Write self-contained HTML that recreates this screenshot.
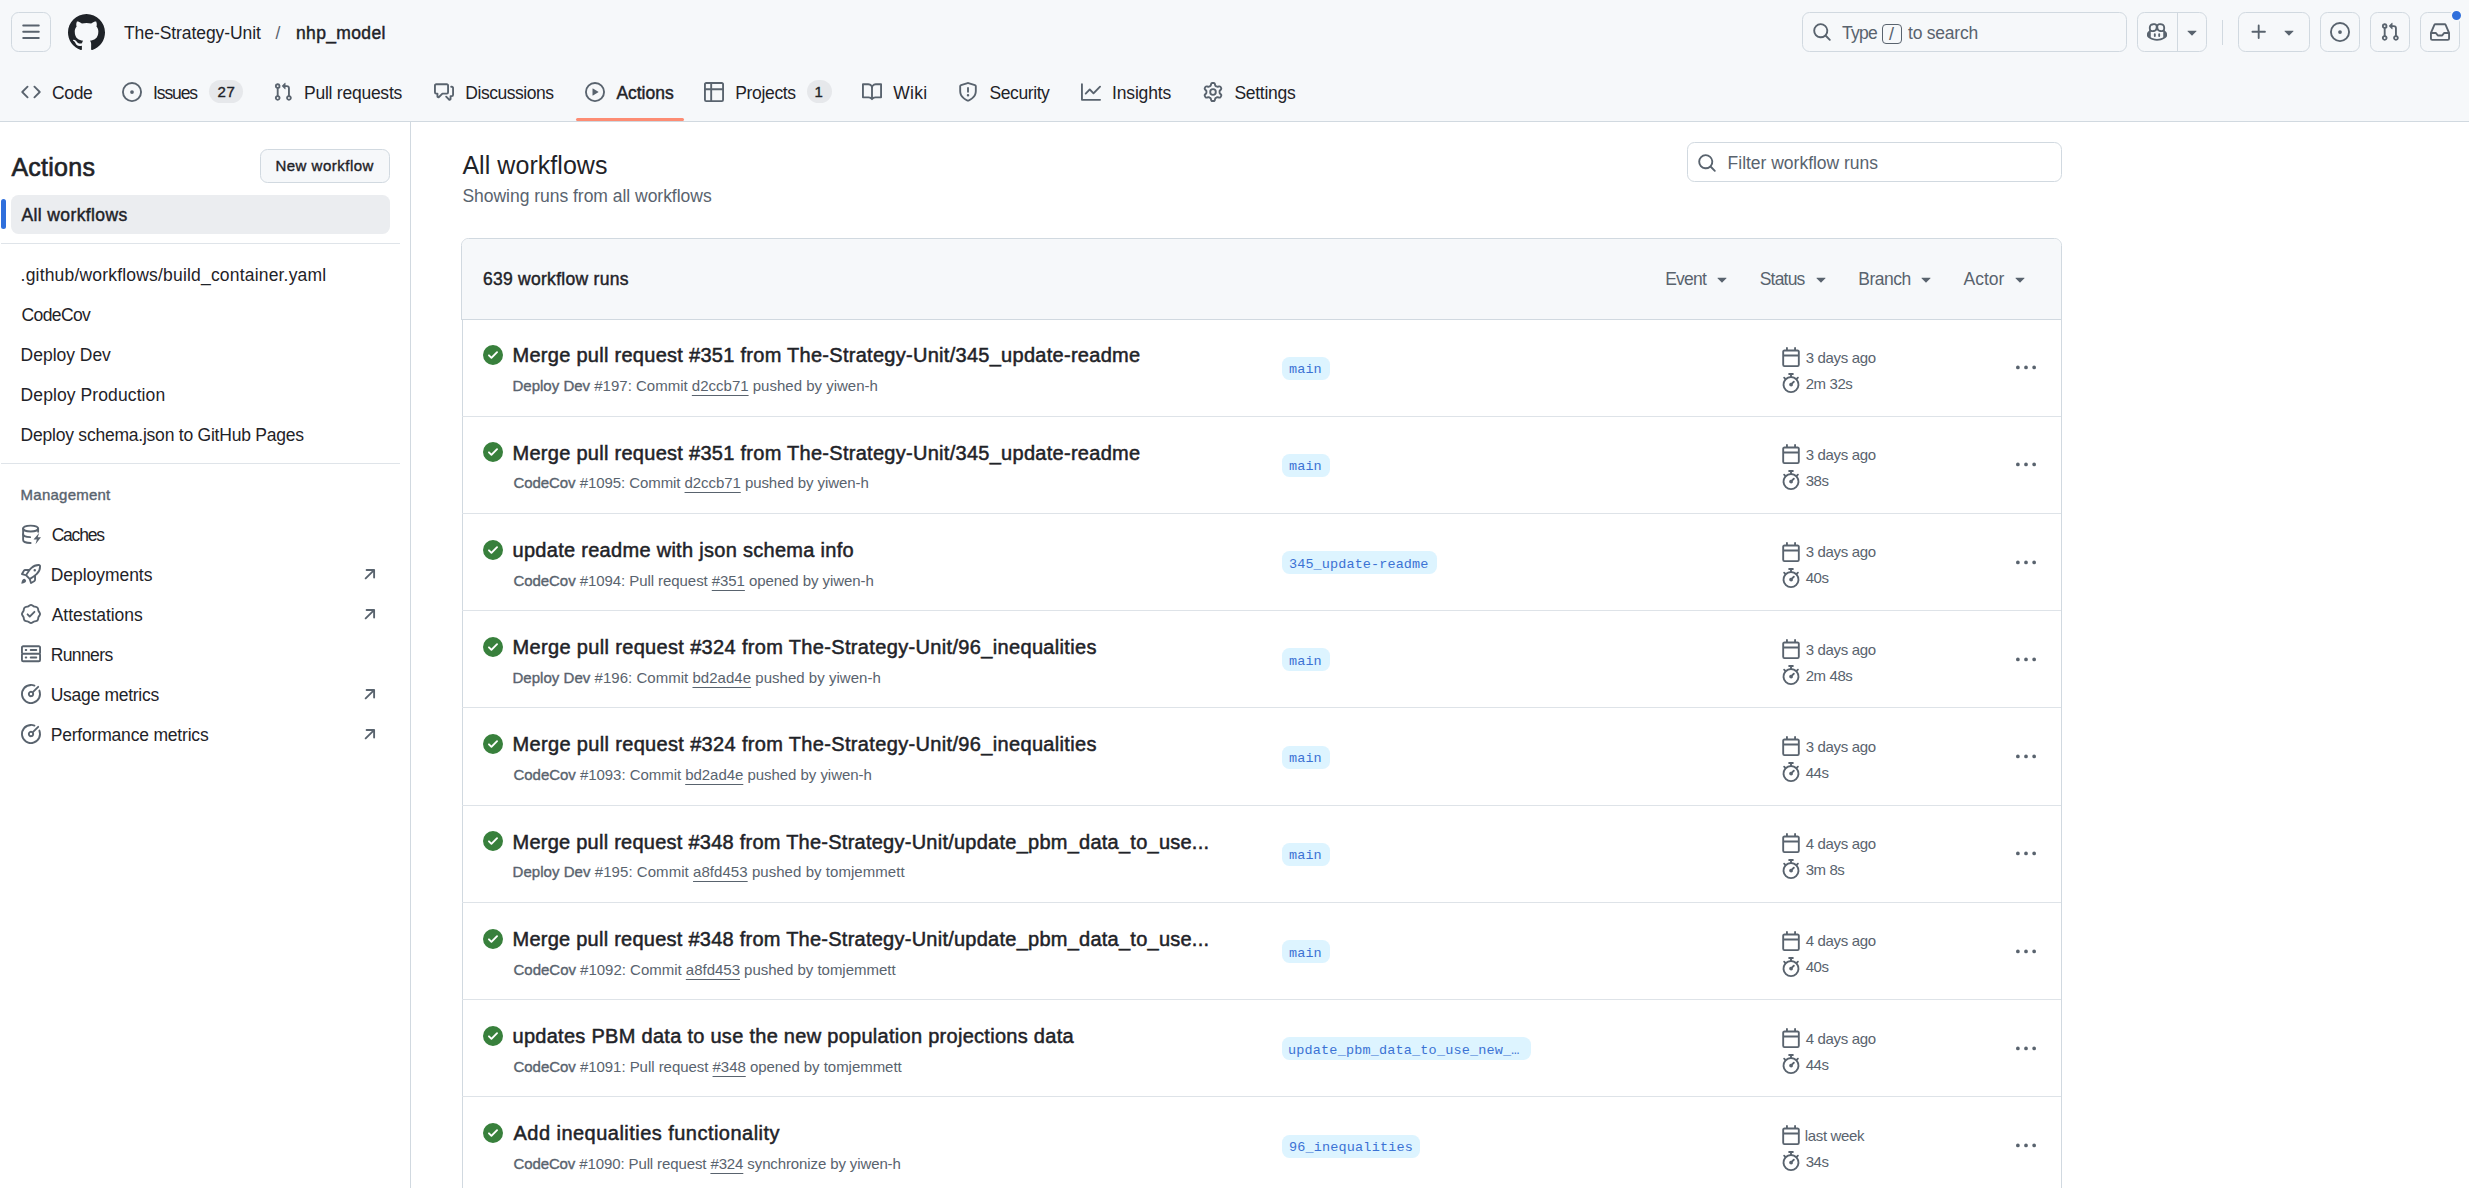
<!DOCTYPE html><html><head><meta charset="utf-8"><style>
*{margin:0;padding:0}
html,body{width:2469px;height:1188px;overflow:hidden;background:#fff;font-family:'Liberation Sans', sans-serif;}
.b{position:absolute}
.ic{position:absolute;display:block;overflow:visible}
.t{position:absolute;white-space:pre;line-height:30px;}
.t b{font-weight:400;-webkit-text-stroke:0.375px #59636e}
.t u{text-decoration:underline;text-underline-offset:4px;text-decoration-thickness:1px}
</style></head><body><div class="b" style="left:0px;top:0px;width:2469px;height:121px;background:#f6f8fa;border-bottom:1px solid #d1d9e0;"></div><div class="b" style="left:11px;top:12px;width:40px;height:40px;box-sizing:border-box;border:1px solid #d1d9e0;border-radius:7.5px;"></div><svg class="ic" style="left:21px;top:22px;width:20px;height:20px;color:#59636e;" viewBox="0 0 16 16" fill="currentColor"><path d="M1 2.75A.75.75 0 0 1 1.75 2h12.5a.75.75 0 0 1 0 1.5H1.75A.75.75 0 0 1 1 2.75Zm0 5A.75.75 0 0 1 1.75 7h12.5a.75.75 0 0 1 0 1.5H1.75A.75.75 0 0 1 1 7.75ZM1.75 12h12.5a.75.75 0 0 1 0 1.5H1.75a.75.75 0 0 1 0-1.5Z"/></svg><svg class="ic" style="left:67.5px;top:14px;width:37px;height:37px;color:#1f2328;" viewBox="0 0 16 16" fill="currentColor"><path d="M8 0c4.42 0 8 3.58 8 8a8.013 8.013 0 0 1-5.45 7.59c-.4.08-.55-.17-.55-.38 0-.27.01-1.13.01-2.2 0-.75-.25-1.23-.54-1.48 1.78-.2 3.650-.88 3.65-3.95 0-.88-.31-1.59-.82-2.15.08-.2.36-1.02-.08-2.12 0 0-.67-.22-2.2.82-.64-.18-1.32-.27-2-.27-.68 0-1.36.09-2 .27-1.53-1.03-2.2-.82-2.2-.82-.44 1.1-.16 1.92-.08 2.12-.51.56-.82 1.28-.82 2.15 0 3.06 1.86 3.750 3.64 3.95-.23.2-.44.55-.51 1.07-.46.21-1.61.55-2.33-.66-.15-.24-.6-.83-1.23-.82-.67.01-.27.38.01.53.34.19.73.9.82 1.13.16.45.68 1.31 2.69.94 0 .67.01 1.3.01 1.49 0 .21-.15.45-.55.38A7.995 7.995 0 0 1 0 8c0-4.42 3.58-8 8-8Z"/></svg><div class="t" id="t0" style="left:124.0px;top:18.00px;font-size:17.5px;font-weight:400;color:#1f2328;font-family:'Liberation Sans', sans-serif;letter-spacing:-0.078px;">The-Strategy-Unit</div><div class="t" id="t1" style="left:275.5px;top:18.00px;font-size:17.5px;font-weight:400;color:#59636e;font-family:'Liberation Sans', sans-serif;letter-spacing:0.000px;">/</div><div class="t" id="t2" style="left:296px;top:18.00px;font-size:17.5px;font-weight:400;-webkit-text-stroke:0.438px #1f2328;color:#1f2328;font-family:'Liberation Sans', sans-serif;letter-spacing:0.347px;">nhp_model</div><div class="b" style="left:1802px;top:12px;width:325px;height:40px;box-sizing:border-box;border:1px solid #d1d9e0;border-radius:7.5px;"></div><svg class="ic" style="left:1812px;top:22px;width:20px;height:20px;color:#59636e;" viewBox="0 0 16 16" fill="currentColor"><path d="M10.68 11.74a6 6 0 0 1-7.922-8.982 6 6 0 0 1 8.982 7.922l3.04 3.04a.749.749 0 0 1-.326 1.275.749.749 0 0 1-.734-.215ZM11.5 7a4.499 4.499 0 1 0-8.997 0A4.499 4.499 0 0 0 11.5 7Z"/></svg><div class="t" id="t3" style="left:1842.0px;top:17.50px;font-size:17.5px;font-weight:400;color:#59636e;font-family:'Liberation Sans', sans-serif;letter-spacing:-0.740px;">Type</div><div class="b" style="left:1882px;top:24px;width:20px;height:20px;box-sizing:border-box;border:1px solid #59636e;border-radius:4px;"></div><div class="t" id="t4" style="left:1889.0px;top:19.00px;font-size:18px;font-weight:400;color:#59636e;font-family:'Liberation Sans', sans-serif;letter-spacing:0.000px;">/</div><div class="t" id="t5" style="left:1908.0px;top:17.50px;font-size:17.5px;font-weight:400;color:#59636e;font-family:'Liberation Sans', sans-serif;letter-spacing:-0.219px;">to search</div><div class="b" style="left:2137px;top:12px;width:70px;height:40px;box-sizing:border-box;border:1px solid #d1d9e0;border-radius:7.5px;"></div><div class="b" style="left:2177px;top:12px;width:1px;height:40px;background:#d1d9e0;"></div><svg class="ic" style="left:2147px;top:22px;width:20px;height:20px;color:#59636e;" viewBox="0 0 16 16" fill="currentColor"><path d="M7.998 15.035c-4.562 0-7.873-2.914-7.998-3.749V9.338c.085-.628.677-1.686 1.588-2.065.013-.07.024-.143.036-.218.029-.183.06-.384.126-.612-.201-.508-.254-1.084-.254-1.656 0-.87.128-1.769.693-2.484.579-.733 1.494-1.124 2.724-1.261 1.206-.134 2.262.034 2.944.765.05.053.096.108.139.165.044-.057.094-.112.143-.165.682-.731 1.738-.899 2.944-.765 1.23.137 2.145.528 2.724 1.261.566.715.693 1.614.693 2.484 0 .572-.053 1.148-.254 1.656.066.228.098.429.126.612.012.076.024.148.037.218.924.385 1.522 1.471 1.591 2.095v1.872c0 .766-3.351 3.795-8.002 3.795Zm0-1.485c2.28 0 4.584-1.11 5.002-1.433V7.862l-.023-.116c-.49.21-1.075.291-1.727.291-1.146 0-2.059-.327-2.71-.991A3.222 3.222 0 0 1 8 6.303a3.24 3.24 0 0 1-.544.743c-.65.664-1.563.991-2.71.991-.652 0-1.236-.081-1.727-.291l-.023.116v4.255c.419.323 2.722 1.433 5.002 1.433ZM6.762 2.83c-.193-.206-.637-.413-1.682-.297-1.019.113-1.479.404-1.713.7-.247.312-.369.789-.369 1.554 0 .793.129 1.171.308 1.371.162.181.519.379 1.442.379.853 0 1.339-.235 1.638-.54.315-.322.527-.827.617-1.553.117-.935-.037-1.395-.241-1.614Zm4.155-.297c-1.044-.116-1.488.091-1.681.297-.204.219-.359.679-.242 1.614.091.726.303 1.231.618 1.553.299.305.784.54 1.638.54.922 0 1.280-.198 1.442-.379.179-.2.308-.578.308-1.371 0-.765-.123-1.242-.37-1.554-.233-.296-.693-.587-1.713-.7Z"/><path d="M6.25 9.037a.75.75 0 0 1 .75.75v1.501a.75.75 0 0 1-1.5 0V9.787a.75.75 0 0 1 .75-.75Zm4.25.75v1.501a.75.75 0 0 1-1.5 0V9.787a.75.75 0 0 1 1.5 0Z"/></svg><svg class="ic" style="left:2182px;top:22px;width:20px;height:20px;color:#59636e;" viewBox="0 0 16 16" fill="currentColor"><path d="m4.427 7.427 3.396 3.396a.25.25 0 0 0 .354 0l3.396-3.396A.25.25 0 0 0 11.396 7H4.604a.25.25 0 0 0-.177.427Z"/></svg><div class="b" style="left:2222px;top:20px;width:1px;height:25px;background:#d1d9e0;"></div><div class="b" style="left:2238px;top:12px;width:72px;height:40px;box-sizing:border-box;border:1px solid #d1d9e0;border-radius:7.5px;"></div><svg class="ic" style="left:2249px;top:22px;width:20px;height:20px;color:#59636e;" viewBox="0 0 16 16" fill="currentColor"><path d="M7.75 2a.75.75 0 0 1 .75.75V7h4.25a.75.75 0 0 1 0 1.5H8.5v4.25a.75.75 0 0 1-1.5 0V8.5H2.75a.75.75 0 0 1 0-1.5H7V2.75A.75.75 0 0 1 7.75 2Z"/></svg><svg class="ic" style="left:2279px;top:22px;width:20px;height:20px;color:#59636e;" viewBox="0 0 16 16" fill="currentColor"><path d="m4.427 7.427 3.396 3.396a.25.25 0 0 0 .354 0l3.396-3.396A.25.25 0 0 0 11.396 7H4.604a.25.25 0 0 0-.177.427Z"/></svg><div class="b" style="left:2320px;top:12px;width:40px;height:40px;box-sizing:border-box;border:1px solid #d1d9e0;border-radius:7.5px;"></div><svg class="ic" style="left:2330px;top:22px;width:20px;height:20px;color:#59636e;" viewBox="0 0 16 16" fill="currentColor"><path d="M8 9.5a1.5 1.5 0 1 0 0-3 1.5 1.5 0 0 0 0 3Z"/><path d="M8 0a8 8 0 1 1 0 16A8 8 0 0 1 8 0ZM1.5 8a6.5 6.5 0 1 0 13 0 6.5 6.5 0 0 0-13 0Z"/></svg><div class="b" style="left:2370px;top:12px;width:40px;height:40px;box-sizing:border-box;border:1px solid #d1d9e0;border-radius:7.5px;"></div><svg class="ic" style="left:2380px;top:22px;width:20px;height:20px;color:#59636e;" viewBox="0 0 16 16" fill="currentColor"><path d="M1.5 3.25a2.25 2.25 0 1 1 3 2.122v5.256a2.251 2.251 0 1 1-1.5 0V5.372A2.25 2.25 0 0 1 1.5 3.25Zm5.677-.177L9.573.677A.25.25 0 0 1 10 .854V2.5h1A2.5 2.5 0 0 1 13.5 5v5.628a2.251 2.251 0 1 1-1.5 0V5a1 1 0 0 0-1-1h-1v1.646a.25.25 0 0 1-.427.177L7.177 3.427a.25.25 0 0 1 0-.354ZM3.75 2.5a.75.75 0 1 0 0 1.5.75.75 0 0 0 0-1.5Zm0 9.5a.75.75 0 1 0 0 1.5.75.75 0 0 0 0-1.5Zm8.25.75a.75.75 0 1 0 1.5 0 .75.75 0 0 0-1.5 0Z"/></svg><div class="b" style="left:2420px;top:12px;width:40px;height:40px;box-sizing:border-box;border:1px solid #d1d9e0;border-radius:7.5px;"></div><svg class="ic" style="left:2430px;top:22px;width:20px;height:20px;color:#59636e;" viewBox="0 0 16 16" fill="currentColor"><path d="M2.8 2.06A1.75 1.75 0 0 1 4.41 1h7.18c.7 0 1.333.417 1.61 1.06l2.74 6.395c.04.093.06.194.06.295v4.5A1.75 1.75 0 0 1 14.25 15H1.75A1.75 1.75 0 0 1 0 13.25v-4.5c0-.101.02-.202.06-.295Zm1.61.44a.25.25 0 0 0-.23.152L1.887 8H4.75a.75.75 0 0 1 .6.3L6.625 10h2.75l1.275-1.7a.75.75 0 0 1 .6-.3h2.863L11.82 2.652a.25.25 0 0 0-.23-.152Zm10.09 7h-2.875l-1.275 1.7a.75.75 0 0 1-.6.3h-3.5a.75.75 0 0 1-.6-.3L4.375 9.5H1.5v3.75c0 .138.112.25.25.25h12.5a.25.25 0 0 0 .25-.25Z"/></svg><div class="b" style="left:2450px;top:9px;width:13px;height:13px;box-sizing:border-box;background:#2f6fdc;border:2px solid #f6f8fa;border-radius:50%;"></div><svg class="ic" style="left:21px;top:82px;width:20px;height:20px;color:#59636e;" viewBox="0 0 16 16" fill="currentColor"><path d="m11.28 3.22 4.25 4.25a.75.75 0 0 1 0 1.06l-4.25 4.25a.749.749 0 0 1-1.275-.326.749.749 0 0 1 .215-.734L13.94 8l-3.72-3.72a.749.749 0 0 1 .326-1.275.749.749 0 0 1 .734.215Zm-6.56 0a.751.751 0 0 1 1.042.018.751.751 0 0 1 .018 1.042L2.06 8l3.72 3.72a.749.749 0 0 1-.326 1.275.749.749 0 0 1-.734-.215L.47 8.53a.75.75 0 0 1 0-1.06Z"/></svg><div class="t" id="t6" style="left:52.0px;top:78.20px;font-size:17.5px;font-weight:400;color:#1f2328;font-family:'Liberation Sans', sans-serif;letter-spacing:-0.370px;">Code</div><svg class="ic" style="left:122px;top:82px;width:20px;height:20px;color:#59636e;" viewBox="0 0 16 16" fill="currentColor"><path d="M8 9.5a1.5 1.5 0 1 0 0-3 1.5 1.5 0 0 0 0 3Z"/><path d="M8 0a8 8 0 1 1 0 16A8 8 0 0 1 8 0ZM1.5 8a6.5 6.5 0 1 0 13 0 6.5 6.5 0 0 0-13 0Z"/></svg><div class="t" id="t7" style="left:153px;top:78.20px;font-size:17.5px;font-weight:400;color:#1f2328;font-family:'Liberation Sans', sans-serif;letter-spacing:-1.106px;">Issues</div><svg class="ic" style="left:273px;top:82px;width:20px;height:20px;color:#59636e;" viewBox="0 0 16 16" fill="currentColor"><path d="M1.5 3.25a2.25 2.25 0 1 1 3 2.122v5.256a2.251 2.251 0 1 1-1.5 0V5.372A2.25 2.25 0 0 1 1.5 3.25Zm5.677-.177L9.573.677A.25.25 0 0 1 10 .854V2.5h1A2.5 2.5 0 0 1 13.5 5v5.628a2.251 2.251 0 1 1-1.5 0V5a1 1 0 0 0-1-1h-1v1.646a.25.25 0 0 1-.427.177L7.177 3.427a.25.25 0 0 1 0-.354ZM3.75 2.5a.75.75 0 1 0 0 1.5.75.75 0 0 0 0-1.5Zm0 9.5a.75.75 0 1 0 0 1.5.75.75 0 0 0 0-1.5Zm8.25.75a.75.75 0 1 0 1.5 0 .75.75 0 0 0-1.5 0Z"/></svg><div class="t" id="t8" style="left:304px;top:78.20px;font-size:17.5px;font-weight:400;color:#1f2328;font-family:'Liberation Sans', sans-serif;letter-spacing:-0.243px;">Pull requests</div><svg class="ic" style="left:434px;top:82px;width:20px;height:20px;color:#59636e;" viewBox="0 0 16 16" fill="currentColor"><path d="M1.75 1h8.5c.966 0 1.75.784 1.75 1.75v5.5A1.75 1.75 0 0 1 10.25 10H7.061l-2.574 2.573A1.458 1.458 0 0 1 2 11.543V10h-.25A1.75 1.75 0 0 1 0 8.25v-5.5C0 1.784.784 1 1.75 1ZM1.5 2.75v5.5c0 .138.112.25.25.25h1a.75.75 0 0 1 .75.75v2.19l2.72-2.72a.749.749 0 0 1 .53-.22h3.5a.25.25 0 0 0 .25-.25v-5.5a.25.25 0 0 0-.25-.25h-8.5a.25.25 0 0 0-.25.25Zm13 2a.25.25 0 0 0-.25-.25h-.5a.75.75 0 0 1 0-1.5h.5c.966 0 1.75.784 1.75 1.75v5.5A1.75 1.75 0 0 1 14.25 12H14v1.543a1.458 1.458 0 0 1-2.487 1.030L9.22 12.28a.749.749 0 0 1 .326-1.275.749.749 0 0 1 .734.215l2.22 2.22v-2.19a.75.75 0 0 1 .75-.75h1a.25.25 0 0 0 .25-.25Z"/></svg><div class="t" id="t9" style="left:465.3px;top:78.20px;font-size:17.5px;font-weight:400;color:#1f2328;font-family:'Liberation Sans', sans-serif;letter-spacing:-0.463px;">Discussions</div><svg class="ic" style="left:585px;top:82px;width:20px;height:20px;color:#59636e;" viewBox="0 0 16 16" fill="currentColor"><path d="M8 0a8 8 0 1 1 0 16A8 8 0 0 1 8 0ZM1.5 8a6.5 6.5 0 1 0 13 0 6.5 6.5 0 0 0-13 0Zm4.879-2.773 4.264 2.559a.25.25 0 0 1 0 .428l-4.264 2.559A.25.25 0 0 1 6 10.559V5.442a.25.25 0 0 1 .379-.215Z"/></svg><div class="t" id="t10" style="left:616.4px;top:78.20px;font-size:17.5px;font-weight:400;-webkit-text-stroke:0.438px #1f2328;color:#1f2328;font-family:'Liberation Sans', sans-serif;letter-spacing:-0.023px;">Actions</div><svg class="ic" style="left:704px;top:82px;width:20px;height:20px;color:#59636e;" viewBox="0 0 16 16" fill="currentColor"><path d="M0 1.75C0 .784.784 0 1.75 0h12.5C15.216 0 16 .784 16 1.75v12.5A1.75 1.75 0 0 1 14.25 16H1.75A1.75 1.75 0 0 1 0 14.25ZM6.5 6.5v8h7.75a.25.25 0 0 0 .25-.25V6.5Zm8-1.5V1.75a.25.25 0 0 0-.25-.25H6.5V5Zm-13 1.5v7.75c0 .138.112.25.25.25H5v-8ZM5 5V1.5H1.75a.25.25 0 0 0-.25.25V5Z"/></svg><div class="t" id="t11" style="left:735.3px;top:78.20px;font-size:17.5px;font-weight:400;color:#1f2328;font-family:'Liberation Sans', sans-serif;letter-spacing:-0.353px;">Projects</div><svg class="ic" style="left:862px;top:82px;width:20px;height:20px;color:#59636e;" viewBox="0 0 16 16" fill="currentColor"><path d="M0 1.75A.75.75 0 0 1 .75 1h4.253c1.227 0 2.317.59 3 1.501A3.743 3.743 0 0 1 11.006 1h4.245a.75.75 0 0 1 .75.75v10.5a.75.75 0 0 1-.75.75h-4.507a2.25 2.25 0 0 0-1.591.659l-.622.621a.75.75 0 0 1-1.06 0l-.622-.621A2.25 2.25 0 0 0 5.258 13H.75a.75.75 0 0 1-.75-.75Zm7.251 10.324.004-5.073-.002-2.253A2.25 2.25 0 0 0 5.003 2.5H1.5v9h3.757a3.75 3.75 0 0 1 1.994.574ZM8.755 4.75l-.004 7.322a3.752 3.752 0 0 1 1.992-.572H14.5v-9h-3.495a2.25 2.25 0 0 0-2.250 2.25Z"/></svg><div class="t" id="t12" style="left:893.3px;top:78.20px;font-size:17.5px;font-weight:400;color:#1f2328;font-family:'Liberation Sans', sans-serif;letter-spacing:0.280px;">Wiki</div><svg class="ic" style="left:958px;top:82px;width:20px;height:20px;color:#59636e;" viewBox="0 0 16 16" fill="currentColor"><path d="M7.467.133a1.748 1.748 0 0 1 1.066 0l5.25 1.68A1.75 1.75 0 0 1 15 3.48V7c0 1.566-.32 3.182-1.303 4.682-.983 1.498-2.585 2.813-5.032 3.855a1.697 1.697 0 0 1-1.330 0c-2.447-1.042-4.049-2.357-5.032-3.855C1.32 10.182 1 8.566 1 7V3.48a1.755 1.755 0 0 1 1.217-1.667Zm.61 1.429a.25.25 0 0 0-.153 0l-5.25 1.68a.25.25 0 0 0-.174.238V7c0 1.358.275 2.666 1.057 3.86.784 1.194 2.121 2.34 4.366 3.297a.196.196 0 0 0 .154 0c2.245-.956 3.582-2.104 4.366-3.298C13.225 9.666 13.5 8.36 13.5 7V3.48a.251.251 0 0 0-.174-.237l-5.25-1.68ZM8.75 4.75v3a.75.75 0 0 1-1.5 0v-3a.75.75 0 0 1 1.5 0ZM9 10.5a1 1 0 1 1-2 0 1 1 0 0 1 2 0Z"/></svg><div class="t" id="t13" style="left:989.5px;top:78.20px;font-size:17.5px;font-weight:400;color:#1f2328;font-family:'Liberation Sans', sans-serif;letter-spacing:-0.410px;">Security</div><svg class="ic" style="left:1081px;top:82px;width:20px;height:20px;color:#59636e;" viewBox="0 0 16 16" fill="currentColor"><path d="M1.5 1.75V13.5h13.75a.75.75 0 0 1 0 1.5H.75a.75.75 0 0 1-.75-.75V1.75a.75.75 0 0 1 1.5 0Zm14.28 2.53-5.25 5.25a.75.75 0 0 1-1.06 0L7 7.06 4.28 9.78a.751.751 0 0 1-1.042-.018.751.751 0 0 1-.018-1.042l3.25-3.25a.75.75 0 0 1 1.06 0L10 7.94l4.72-4.72a.751.751 0 0 1 1.042.018.751.751 0 0 1 .018 1.042Z"/></svg><div class="t" id="t14" style="left:1112px;top:78.20px;font-size:17.5px;font-weight:400;color:#1f2328;font-family:'Liberation Sans', sans-serif;letter-spacing:-0.152px;">Insights</div><svg class="ic" style="left:1203px;top:82px;width:20px;height:20px;color:#59636e;" viewBox="0 0 16 16" fill="currentColor"><path d="M8 0a8.2 8.2 0 0 1 .701.031C9.444.095 9.99.645 10.16 1.29l.288 1.107c.018.066.079.158.212.224.231.114.454.243.668.386.123.082.233.09.299.071l1.103-.303c.644-.176 1.392.021 1.82.63.27.385.506.792.704 1.218.315.675.111 1.422-.364 1.891l-.814.806c-.049.048-.098.147-.088.294.016.257.016.515 0 .772-.01.147.038.246.088.294l.814.806c.475.469.679 1.216.364 1.891a7.977 7.977 0 0 1-.704 1.217c-.428.61-1.176.807-1.82.63l-1.102-.302c-.067-.019-.177-.011-.3.071a5.909 5.909 0 0 1-.668.386c-.133.066-.194.158-.211.224l-.29 1.106c-.168.646-.715 1.196-1.458 1.26a8.006 8.006 0 0 1-1.402 0c-.743-.064-1.289-.614-1.458-1.26l-.289-1.106c-.018-.066-.079-.158-.212-.224a5.738 5.738 0 0 1-.668-.386c-.123-.082-.233-.09-.299-.071l-1.103.303c-.644.176-1.392-.021-1.82-.63a8.12 8.12 0 0 1-.704-1.218c-.315-.675-.111-1.422.363-1.891l.815-.806c.05-.048.098-.147.088-.294a6.214 6.214 0 0 1 0-.772c.01-.147-.038-.246-.088-.294l-.815-.806C.635 6.045.431 5.298.746 4.623a7.92 7.92 0 0 1 .704-1.217c.428-.61 1.176-.807 1.82-.63l1.102.302c.067.019.177.011.3-.071.214-.143.437-.272.668-.386.133-.066.194-.158.211-.224l.29-1.106C6.009.645 6.556.095 7.299.03 7.53.01 7.764 0 8 0Zm-.571 1.525c-.036.003-.108.036-.137.146l-.289 1.105c-.147.561-.549.967-.998 1.189-.173.086-.34.183-.5.29-.417.278-.97.423-1.529.27l-1.103-.303c-.109-.03-.175.016-.195.045-.22.312-.412.644-.573.99-.014.031-.021.11.059.19l.815.806c.411.406.562.957.53 1.456a4.709 4.709 0 0 0 0 .582c.032.499-.119 1.05-.53 1.456l-.815.806c-.081.08-.073.159-.059.19.162.346.353.677.573.989.02.03.085.076.195.046l1.102-.303c.56-.153 1.113-.008 1.53.27.161.107.328.204.501.29.447.222.85.629.997 1.189l.289 1.105c.029.109.101.143.137.146a6.6 6.6 0 0 0 1.142 0c.036-.003.108-.036.137-.146l.289-1.105c.147-.561.549-.967.998-1.189.173-.086.34-.183.5-.29.417-.278.97-.423 1.529-.27l1.103.303c.109.029.175-.016.195-.045.22-.313.411-.644.573-.99.014-.031.021-.11-.059-.19l-.815-.806c-.411-.406-.562-.957-.53-1.456a4.709 4.709 0 0 0 0-.582c-.032-.499.119-1.05.53-1.456l.815-.806c.081-.08.073-.159.059-.19a6.464 6.464 0 0 0-.573-.989c-.02-.03-.085-.076-.195-.046l-1.102.303c-.56.153-1.113.008-1.53-.27a4.44 4.44 0 0 0-.501-.29c-.447-.222-.85-.629-.997-1.189l-.289-1.105c-.029-.11-.101-.143-.137-.146a6.6 6.6 0 0 0-1.142 0ZM11 8a3 3 0 1 1-6 0 3 3 0 0 1 6 0ZM9.5 8a1.5 1.5 0 1 0-3.001.001A1.5 1.5 0 0 0 9.5 8Z"/></svg><div class="t" id="t15" style="left:1234.5px;top:78.20px;font-size:17.5px;font-weight:400;color:#1f2328;font-family:'Liberation Sans', sans-serif;letter-spacing:-0.298px;">Settings</div><div class="b" style="left:209px;top:80px;width:34px;height:23px;background:#e6e8eb;border-radius:12px;"></div><div class="t" id="t16" style="left:217.5px;top:77.00px;font-size:15px;font-weight:400;-webkit-text-stroke:0.375px #1f2328;color:#1f2328;font-family:'Liberation Sans', sans-serif;letter-spacing:0.655px;">27</div><div class="b" style="left:807px;top:80px;width:25px;height:23px;background:#e6e8eb;border-radius:12px;"></div><div class="t" id="t17" style="left:814.5px;top:77.00px;font-size:15px;font-weight:400;-webkit-text-stroke:0.375px #1f2328;color:#1f2328;font-family:'Liberation Sans', sans-serif;letter-spacing:0.000px;">1</div><div class="b" style="left:576px;top:118px;width:108px;height:3px;background:#fd8c73;border-radius:2px;"></div><div class="b" style="left:410px;top:122px;width:1px;height:1066px;background:#d1d9e0;"></div><div class="t" id="t18" style="left:11.4px;top:152.00px;font-size:25px;font-weight:400;-webkit-text-stroke:0.625px #1f2328;color:#1f2328;font-family:'Liberation Sans', sans-serif;letter-spacing:0.253px;">Actions</div><div class="b" style="left:260px;top:149px;width:130px;height:34px;box-sizing:border-box;background:#f6f8fa;border:1px solid #d1d9e0;border-radius:7.5px;"></div><div class="t" id="t19" style="left:275.4px;top:151.00px;font-size:15px;font-weight:400;-webkit-text-stroke:0.375px #1f2328;color:#1f2328;font-family:'Liberation Sans', sans-serif;letter-spacing:0.500px;">New workflow</div><div class="b" style="left:11px;top:195px;width:379px;height:39px;background:#ebedf0;border-radius:7.5px;"></div><div class="b" style="left:1px;top:199px;width:5px;height:30px;background:#2f6fdc;border-radius:3px;"></div><div class="t" id="t20" style="left:21.5px;top:199.80px;font-size:17.5px;font-weight:400;-webkit-text-stroke:0.438px #1f2328;color:#1f2328;font-family:'Liberation Sans', sans-serif;letter-spacing:0.384px;">All workflows</div><div class="b" style="left:1px;top:243px;width:399px;height:1px;background:#dfe4e9;"></div><div class="t" id="t21" style="left:20.6px;top:259.80px;font-size:17.5px;font-weight:400;color:#1f2328;font-family:'Liberation Sans', sans-serif;letter-spacing:0.188px;">.github/workflows/build_container.yaml</div><div class="t" id="t22" style="left:21.6px;top:299.60px;font-size:17.5px;font-weight:400;color:#1f2328;font-family:'Liberation Sans', sans-serif;letter-spacing:-0.620px;">CodeCov</div><div class="t" id="t23" style="left:20.6px;top:339.70px;font-size:17.5px;font-weight:400;color:#1f2328;font-family:'Liberation Sans', sans-serif;letter-spacing:-0.024px;">Deploy Dev</div><div class="t" id="t24" style="left:20.6px;top:379.70px;font-size:17.5px;font-weight:400;color:#1f2328;font-family:'Liberation Sans', sans-serif;letter-spacing:0.096px;">Deploy Production</div><div class="t" id="t25" style="left:20.6px;top:419.80px;font-size:17.5px;font-weight:400;color:#1f2328;font-family:'Liberation Sans', sans-serif;letter-spacing:-0.224px;">Deploy schema.json to GitHub Pages</div><div class="b" style="left:1px;top:463px;width:399px;height:1px;background:#dfe4e9;"></div><div class="t" id="t26" style="left:20.6px;top:479.70px;font-size:15px;font-weight:400;-webkit-text-stroke:0.375px #59636e;color:#59636e;font-family:'Liberation Sans', sans-serif;letter-spacing:0.234px;">Management</div><svg class="ic" style="left:21.2px;top:524.0px;width:20px;height:20px;color:#59636e;" viewBox="0 0 16 16" fill="currentColor"><g fill="none" stroke="currentColor" stroke-width="1.5" stroke-linecap="round"><ellipse cx="7.7" cy="3.6" rx="6" ry="2.35"/><path d="M1.7 3.6v9.1c0 1.35 2.6 2.45 6 2.45"/><path d="M1.7 8.2c0 1.3 2.5 2.3 5.6 2.3"/><path d="M13.7 3.6v2.6"/></g><path d="M14.6 6.9 10 12.4H12.7L11.6 16.2 16 10.6H13.4Z"/></svg><div class="t" id="t27" style="left:51.7px;top:519.50px;font-size:17.5px;font-weight:400;color:#1f2328;font-family:'Liberation Sans', sans-serif;letter-spacing:-1.219px;">Caches</div><svg class="ic" style="left:21.2px;top:564.1px;width:20px;height:20px;color:#59636e;" viewBox="0 0 16 16" fill="currentColor"><path d="M14.064 0h.186C15.216 0 16 .784 16 1.75v.186a8.752 8.752 0 0 1-2.564 6.186l-.458.459c-.314.314-.641.616-.979.904v3.207c0 .608-.315 1.172-.833 1.49l-2.774 1.707a.749.749 0 0 1-1.11-.418l-.954-3.102a1.214 1.214 0 0 1-.145-.125L3.754 9.816a1.218 1.218 0 0 1-.124-.145L.528 8.717a.749.749 0 0 1-.418-1.11l1.71-2.774A1.748 1.748 0 0 1 3.31 4h3.204c.288-.338.59-.665.904-.979l.459-.458A8.749 8.749 0 0 1 14.064 0ZM8.938 3.623h-.002l-.458.458c-.76.76-1.437 1.598-2.02 2.5l-1.5 2.317 2.143 2.143 2.317-1.5c.902-.583 1.74-1.26 2.499-2.02l.459-.458a7.25 7.25 0 0 0 2.123-5.127V1.75a.25.25 0 0 0-.25-.25h-.186a7.249 7.249 0 0 0-5.125 2.123ZM3.56 14.56c-.732.732-2.334 1.045-3.005 1.148a.234.234 0 0 1-.201-.064.234.234 0 0 1-.064-.201c.103-.671.416-2.273 1.15-3.003a1.502 1.502 0 1 1 2.120 2.120Zm6.94-3.935c-.088.06-.177.118-.266.175l-2.35 1.521.548 1.783 1.949-1.2a.25.25 0 0 0 .119-.213ZM3.678 8.116 5.2 5.766c.058-.09.117-.178.176-.266H3.309a.25.25 0 0 0-.213.119l-1.2 1.95ZM12 5a1 1 0 1 1-2 0 1 1 0 0 1 2 0Z"/></svg><div class="t" id="t28" style="left:50.7px;top:559.60px;font-size:17.5px;font-weight:400;color:#1f2328;font-family:'Liberation Sans', sans-serif;letter-spacing:-0.039px;">Deployments</div><svg class="ic" style="left:359.5px;top:564.1px;width:20px;height:20px;color:#59636e;" viewBox="0 0 16 16" fill="currentColor"><path d="M4.53 4.75A.75.75 0 0 1 5.28 4h6.01a.75.75 0 0 1 .75.75v6.01a.75.75 0 0 1-1.5 0v-4.2l-5.47 5.47a.749.749 0 0 1-1.275-.326.749.749 0 0 1 .215-.734L9.48 5.5h-4.2a.75.75 0 0 1-.75-.75Z"/></svg><svg class="ic" style="left:21.2px;top:604.2px;width:20px;height:20px;color:#59636e;" viewBox="0 0 16 16" fill="currentColor"><path d="m9.585.52.929.68c.153.112.331.186.518.215l1.138.175a2.678 2.678 0 0 1 2.24 2.24l.174 1.139c.029.187.103.365.215.518l.68.928a2.677 2.677 0 0 1 0 3.17l-.68.928a1.174 1.174 0 0 0-.215.518l-.175 1.138a2.678 2.678 0 0 1-2.241 2.241l-1.138.175a1.17 1.17 0 0 0-.518.215l-.928.68a2.677 2.677 0 0 1-3.17 0l-.928-.68a1.174 1.174 0 0 0-.518-.215L3.83 14.41a2.678 2.678 0 0 1-2.24-2.24l-.175-1.138a1.17 1.17 0 0 0-.215-.518l-.68-.928a2.677 2.677 0 0 1 0-3.170l.68-.928c.112-.153.186-.331.215-.518l.175-1.14a2.678 2.678 0 0 1 2.24-2.24l1.139-.175c.187-.029.365-.103.518-.215l.928-.68a2.677 2.677 0 0 1 3.17 0ZM7.303 1.728l-.927.68a2.67 2.67 0 0 1-1.18.489l-1.137.174a1.179 1.179 0 0 0-.987.987l-.174 1.136a2.677 2.677 0 0 1-.489 1.18l-.68.928a1.18 1.18 0 0 0 0 1.394l.68.927c.256.348.424.753.489 1.18l.174 1.137c.078.509.478.909.987.987l1.136.174a2.67 2.67 0 0 1 1.18.489l.928.68c.414.305.979.305 1.394 0l.927-.68a2.67 2.67 0 0 1 1.18-.489l1.137-.174a1.18 1.18 0 0 0 .987-.987l.174-1.136a2.67 2.67 0 0 1 .489-1.18l.68-.928a1.176 1.176 0 0 0 0-1.394l-.68-.927a2.686 2.686 0 0 1-.489-1.18l-.174-1.137a1.179 1.179 0 0 0-.987-.987l-1.136-.174a2.677 2.677 0 0 1-1.18-.489l-.928-.68a1.176 1.176 0 0 0-1.394 0ZM11.28 6.78l-3.75 3.75a.75.75 0 0 1-1.06 0L4.72 8.780a.751.751 0 0 1 .018-1.042.751.751 0 0 1 1.042-.018l1.22 1.22 3.220-3.220a.751.751 0 0 1 1.042.018.751.751 0 0 1 .018 1.042Z"/></svg><div class="t" id="t29" style="left:51.7px;top:599.70px;font-size:17.5px;font-weight:400;color:#1f2328;font-family:'Liberation Sans', sans-serif;letter-spacing:-0.037px;">Attestations</div><svg class="ic" style="left:359.5px;top:604.2px;width:20px;height:20px;color:#59636e;" viewBox="0 0 16 16" fill="currentColor"><path d="M4.53 4.75A.75.75 0 0 1 5.28 4h6.01a.75.75 0 0 1 .75.75v6.01a.75.75 0 0 1-1.5 0v-4.2l-5.47 5.47a.749.749 0 0 1-1.275-.326.749.749 0 0 1 .215-.734L9.48 5.5h-4.2a.75.75 0 0 1-.75-.75Z"/></svg><svg class="ic" style="left:21.2px;top:644.2px;width:20px;height:20px;color:#59636e;" viewBox="0 0 16 16" fill="currentColor"><path d="M1.75 1h12.5c.966 0 1.75.784 1.75 1.75v4c0 .372-.116.717-.314 1 .198.283.314.628.314 1v4a1.75 1.75 0 0 1-1.75 1.75H1.75A1.75 1.75 0 0 1 0 12.75v-4c0-.358.109-.707.314-1a1.739 1.739 0 0 1-.314-1v-4C0 1.784.784 1 1.75 1ZM1.5 2.75v4c0 .138.112.25.25.25h12.5a.25.25 0 0 0 .25-.25v-4a.25.25 0 0 0-.25-.25H1.75a.25.25 0 0 0-.25.25Zm.25 5.75a.25.25 0 0 0-.25.25v4c0 .138.112.25.25.25h12.5a.25.25 0 0 0 .25-.25v-4a.25.25 0 0 0-.25-.25ZM7 4.75A.75.75 0 0 1 7.75 4h4.5a.75.75 0 0 1 0 1.5h-4.5A.75.75 0 0 1 7 4.75ZM7.75 10h4.5a.75.75 0 0 1 0 1.5h-4.5a.75.75 0 0 1 0-1.5ZM3 4.75A.75.75 0 0 1 3.75 4h.5a.75.75 0 0 1 0 1.5h-.5A.75.75 0 0 1 3 4.75ZM3.75 10h.5a.75.75 0 0 1 0 1.5h-.5a.75.75 0 0 1 0-1.5Z"/></svg><div class="t" id="t30" style="left:50.7px;top:639.70px;font-size:17.5px;font-weight:400;color:#1f2328;font-family:'Liberation Sans', sans-serif;letter-spacing:-0.601px;">Runners</div><svg class="ic" style="left:21.2px;top:684.1px;width:20px;height:20px;color:#59636e;" viewBox="0 0 16 16" fill="currentColor"><path d="M8 1.5a6.5 6.5 0 1 0 6.016 4.035.75.75 0 0 1 1.388-.57 8 8 0 1 1-4.37-4.37.75.75 0 0 1-.569 1.389A6.470 6.470 0 0 0 8 1.5Zm6.28.22a.75.75 0 0 1 0 1.060l-4.063 4.064a2.5 2.5 0 1 1-1.060-1.060L13.220 1.720a.75.75 0 0 1 1.060 0ZM8 7a1 1 0 1 0 0 2 1 1 0 0 0 0-2Z"/></svg><div class="t" id="t31" style="left:50.7px;top:679.60px;font-size:17.5px;font-weight:400;color:#1f2328;font-family:'Liberation Sans', sans-serif;letter-spacing:-0.283px;">Usage metrics</div><svg class="ic" style="left:359.5px;top:684.1px;width:20px;height:20px;color:#59636e;" viewBox="0 0 16 16" fill="currentColor"><path d="M4.53 4.75A.75.75 0 0 1 5.28 4h6.01a.75.75 0 0 1 .75.75v6.01a.75.75 0 0 1-1.5 0v-4.2l-5.47 5.47a.749.749 0 0 1-1.275-.326.749.749 0 0 1 .215-.734L9.48 5.5h-4.2a.75.75 0 0 1-.75-.75Z"/></svg><svg class="ic" style="left:21.2px;top:724.2px;width:20px;height:20px;color:#59636e;" viewBox="0 0 16 16" fill="currentColor"><path d="M8 1.5a6.5 6.5 0 1 0 6.016 4.035.75.75 0 0 1 1.388-.57 8 8 0 1 1-4.37-4.37.75.75 0 0 1-.569 1.389A6.470 6.470 0 0 0 8 1.5Zm6.28.22a.75.75 0 0 1 0 1.060l-4.063 4.064a2.5 2.5 0 1 1-1.060-1.060L13.220 1.720a.75.75 0 0 1 1.060 0ZM8 7a1 1 0 1 0 0 2 1 1 0 0 0 0-2Z"/></svg><div class="t" id="t32" style="left:50.7px;top:719.70px;font-size:17.5px;font-weight:400;color:#1f2328;font-family:'Liberation Sans', sans-serif;letter-spacing:-0.194px;">Performance metrics</div><svg class="ic" style="left:359.5px;top:724.2px;width:20px;height:20px;color:#59636e;" viewBox="0 0 16 16" fill="currentColor"><path d="M4.53 4.75A.75.75 0 0 1 5.28 4h6.01a.75.75 0 0 1 .75.75v6.01a.75.75 0 0 1-1.5 0v-4.2l-5.47 5.47a.749.749 0 0 1-1.275-.326.749.749 0 0 1 .215-.734L9.48 5.5h-4.2a.75.75 0 0 1-.75-.75Z"/></svg><div class="t" id="t33" style="left:462.4px;top:149.90px;font-size:25px;font-weight:400;color:#1f2328;font-family:'Liberation Sans', sans-serif;letter-spacing:0.051px;">All workflows</div><div class="t" id="t34" style="left:462.4px;top:180.60px;font-size:17.5px;font-weight:400;color:#59636e;font-family:'Liberation Sans', sans-serif;letter-spacing:-0.023px;">Showing runs from all workflows</div><div class="b" style="left:1687px;top:142px;width:375px;height:40px;box-sizing:border-box;border:1px solid #d1d9e0;border-radius:7.5px;background:#fff;"></div><svg class="ic" style="left:1697px;top:153px;width:20px;height:20px;color:#59636e;" viewBox="0 0 16 16" fill="currentColor"><path d="M10.68 11.74a6 6 0 0 1-7.922-8.982 6 6 0 0 1 8.982 7.922l3.04 3.04a.749.749 0 0 1-.326 1.275.749.749 0 0 1-.734-.215ZM11.5 7a4.499 4.499 0 1 0-8.997 0A4.499 4.499 0 0 0 11.5 7Z"/></svg><div class="t" id="t35" style="left:1727.6px;top:148.00px;font-size:17.5px;font-weight:400;color:#59636e;font-family:'Liberation Sans', sans-serif;letter-spacing:-0.015px;">Filter workflow runs</div><div class="b" style="left:461px;top:238px;width:1601px;height:960px;box-sizing:border-box;border:1px solid #d1d9e0;border-radius:7.5px 7.5px 0 0;background:#fff;"></div><div class="b" style="left:462px;top:239px;width:1599px;height:80px;background:#f6f8fa;border-radius:6.5px 6.5px 0 0;"></div><div class="b" style="left:462px;top:319px;width:1599px;height:1px;background:#d1d9e0;"></div><div class="b" style="left:461px;top:320px;width:1px;height:868px;background:#fff;"></div><div class="b" style="left:462px;top:320px;width:1px;height:868px;background:#d1d9e0;"></div><div class="t" id="t36" style="left:482.9px;top:263.70px;font-size:17.5px;font-weight:400;-webkit-text-stroke:0.438px #1f2328;color:#1f2328;font-family:'Liberation Sans', sans-serif;letter-spacing:0.281px;">639 workflow runs</div><div class="t" id="t37" style="left:1665.2px;top:264.30px;font-size:17.5px;font-weight:400;color:#59636e;font-family:'Liberation Sans', sans-serif;letter-spacing:-0.772px;">Event</div><svg class="ic" style="left:1712.1px;top:269px;width:20px;height:20px;color:#59636e;" viewBox="0 0 16 16" fill="currentColor"><path d="m4.427 7.427 3.396 3.396a.25.25 0 0 0 .354 0l3.396-3.396A.25.25 0 0 0 11.396 7H4.604a.25.25 0 0 0-.177.427Z"/></svg><div class="t" id="t38" style="left:1759.7px;top:264.30px;font-size:17.5px;font-weight:400;color:#59636e;font-family:'Liberation Sans', sans-serif;letter-spacing:-0.795px;">Status</div><svg class="ic" style="left:1810.6px;top:269px;width:20px;height:20px;color:#59636e;" viewBox="0 0 16 16" fill="currentColor"><path d="m4.427 7.427 3.396 3.396a.25.25 0 0 0 .354 0l3.396-3.396A.25.25 0 0 0 11.396 7H4.604a.25.25 0 0 0-.177.427Z"/></svg><div class="t" id="t39" style="left:1858.2px;top:264.30px;font-size:17.5px;font-weight:400;color:#59636e;font-family:'Liberation Sans', sans-serif;letter-spacing:-0.464px;">Branch</div><svg class="ic" style="left:1915.6px;top:269px;width:20px;height:20px;color:#59636e;" viewBox="0 0 16 16" fill="currentColor"><path d="m4.427 7.427 3.396 3.396a.25.25 0 0 0 .354 0l3.396-3.396A.25.25 0 0 0 11.396 7H4.604a.25.25 0 0 0-.177.427Z"/></svg><div class="t" id="t40" style="left:1963.5px;top:264.30px;font-size:17.5px;font-weight:400;color:#59636e;font-family:'Liberation Sans', sans-serif;letter-spacing:0.017px;">Actor</div><svg class="ic" style="left:2009.6px;top:269px;width:20px;height:20px;color:#59636e;" viewBox="0 0 16 16" fill="currentColor"><path d="m4.427 7.427 3.396 3.396a.25.25 0 0 0 .354 0l3.396-3.396A.25.25 0 0 0 11.396 7H4.604a.25.25 0 0 0-.177.427Z"/></svg><div class="b" style="left:462px;top:416px;width:1599px;height:1px;background:#dee3e8;"></div><svg class="ic" style="left:483px;top:345.0px;width:20px;height:20px;color:#38803c;" viewBox="0 0 16 16" fill="currentColor"><path d="M8 16A8 8 0 1 1 8 0a8 8 0 0 1 0 16Zm3.78-9.72a.751.751 0 0 0-.018-1.042.751.751 0 0 0-1.042-.018L6.75 9.19 5.28 7.72a.751.751 0 0 0-1.042.018.751.751 0 0 0-.018 1.042l2 2a.75.75 0 0 0 1.060 0Z"/></svg><div class="t" id="t41" style="left:512.5px;top:340.30px;font-size:20px;font-weight:400;-webkit-text-stroke:0.500px #1f2328;color:#1f2328;font-family:'Liberation Sans', sans-serif;letter-spacing:0.280px;">Merge pull request #351 from The-Strategy-Unit/345_update-readme</div><div class="t" id="t42" style="left:512.5px;top:371.10px;font-size:15px;font-weight:400;color:#59636e;font-family:'Liberation Sans', sans-serif;letter-spacing:0.004px;"><b>Deploy Dev</b> #197: Commit <u>d2ccb71</u> pushed by yiwen-h</div><div class="b" style="left:1282px;top:356.7px;width:48px;height:23px;background:#ddf4ff;border-radius:7.5px;"></div><div class="t" id="t43" style="left:1289.0px;top:355.10px;font-size:13.5px;font-weight:400;color:#3b72d4;font-family:'Liberation Mono', monospace;letter-spacing:0.105px;">main</div><svg class="ic" style="left:1781px;top:347.0px;width:20px;height:20px;color:#59636e;" viewBox="0 0 16 16" fill="currentColor"><path d="M4.75 0a.75.75 0 0 1 .75.75V2h5V.75a.75.75 0 0 1 1.5 0V2h1.25c.966 0 1.75.784 1.75 1.75v10.5A1.75 1.75 0 0 1 13.25 16H2.75A1.75 1.75 0 0 1 1 14.25V3.75C1 2.784 1.784 2 2.75 2H4V.75A.75.75 0 0 1 4.75 0ZM2.5 7.5v6.75c0 .138.112.25.25.25h10.5a.25.25 0 0 0 .25-.25V7.5Zm10.75-4H2.75a.25.25 0 0 0-.25.25V6h11V3.75a.25.25 0 0 0-.25-.25Z"/></svg><div class="t" id="t44" style="left:1805.7px;top:342.80px;font-size:15px;font-weight:400;color:#59636e;font-family:'Liberation Sans', sans-serif;letter-spacing:-0.341px;">3 days ago</div><svg class="ic" style="left:1781px;top:373.0px;width:20px;height:20px;color:#59636e;" viewBox="0 0 16 16" fill="currentColor"><path d="M5.75.75A.75.75 0 0 1 6.5 0h3a.75.75 0 0 1 0 1.5h-.75v1l-.001.041a6.724 6.724 0 0 1 3.464 1.435l.007-.006.75-.75a.749.749 0 0 1 1.275.326.749.749 0 0 1-.215.734l-.75.75-.006.007a6.75 6.75 0 1 1-10.548 0L2.72 5.03l-.75-.75a.751.751 0 0 1 .018-1.042.751.751 0 0 1 1.042-.018l.75.75.007.006A6.72 6.72 0 0 1 7.25 2.541V1.5H6.5a.75.75 0 0 1-.75-.75ZM8 14.5a5.25 5.25 0 1 0-.001-10.501A5.25 5.25 0 0 0 8 14.5Zm.389-6.7 1.33-1.33a.75.75 0 1 1 1.061 1.06L9.45 8.861A1.503 1.503 0 0 1 8 10.75a1.499 1.499 0 1 1 .389-2.950Z"/></svg><div class="t" id="t45" style="left:1805.7px;top:368.90px;font-size:15px;font-weight:400;color:#59636e;font-family:'Liberation Sans', sans-serif;letter-spacing:-0.409px;">2m 32s</div><svg class="ic" style="left:2016px;top:358.0px;width:20px;height:20px;color:#59636e;" viewBox="0 0 16 16" fill="currentColor"><path d="M8 9a1.5 1.5 0 1 0 0-3 1.5 1.5 0 0 0 0 3ZM1.5 9a1.5 1.5 0 1 0 0-3 1.5 1.5 0 0 0 0 3Zm13 0a1.5 1.5 0 1 0 0-3 1.5 1.5 0 0 0 0 3Z"/></svg><div class="b" style="left:462px;top:513px;width:1599px;height:1px;background:#dee3e8;"></div><svg class="ic" style="left:483px;top:442.25px;width:20px;height:20px;color:#38803c;" viewBox="0 0 16 16" fill="currentColor"><path d="M8 16A8 8 0 1 1 8 0a8 8 0 0 1 0 16Zm3.78-9.72a.751.751 0 0 0-.018-1.042.751.751 0 0 0-1.042-.018L6.75 9.19 5.28 7.72a.751.751 0 0 0-1.042.018.751.751 0 0 0-.018 1.042l2 2a.75.75 0 0 0 1.060 0Z"/></svg><div class="t" id="t46" style="left:512.5px;top:437.55px;font-size:20px;font-weight:400;-webkit-text-stroke:0.500px #1f2328;color:#1f2328;font-family:'Liberation Sans', sans-serif;letter-spacing:0.280px;">Merge pull request #351 from The-Strategy-Unit/345_update-readme</div><div class="t" id="t47" style="left:513.5px;top:468.35px;font-size:15px;font-weight:400;color:#59636e;font-family:'Liberation Sans', sans-serif;letter-spacing:-0.070px;"><b>CodeCov</b> #1095: Commit <u>d2ccb71</u> pushed by yiwen-h</div><div class="b" style="left:1282px;top:453.95px;width:48px;height:23px;background:#ddf4ff;border-radius:7.5px;"></div><div class="t" id="t48" style="left:1289.0px;top:452.35px;font-size:13.5px;font-weight:400;color:#3b72d4;font-family:'Liberation Mono', monospace;letter-spacing:0.105px;">main</div><svg class="ic" style="left:1781px;top:444.25px;width:20px;height:20px;color:#59636e;" viewBox="0 0 16 16" fill="currentColor"><path d="M4.75 0a.75.75 0 0 1 .75.75V2h5V.75a.75.75 0 0 1 1.5 0V2h1.25c.966 0 1.75.784 1.75 1.75v10.5A1.75 1.75 0 0 1 13.25 16H2.75A1.75 1.75 0 0 1 1 14.25V3.75C1 2.784 1.784 2 2.75 2H4V.75A.75.75 0 0 1 4.75 0ZM2.5 7.5v6.75c0 .138.112.25.25.25h10.5a.25.25 0 0 0 .25-.25V7.5Zm10.75-4H2.75a.25.25 0 0 0-.25.25V6h11V3.75a.25.25 0 0 0-.25-.25Z"/></svg><div class="t" id="t49" style="left:1805.7px;top:440.05px;font-size:15px;font-weight:400;color:#59636e;font-family:'Liberation Sans', sans-serif;letter-spacing:-0.341px;">3 days ago</div><svg class="ic" style="left:1781px;top:470.25px;width:20px;height:20px;color:#59636e;" viewBox="0 0 16 16" fill="currentColor"><path d="M5.75.75A.75.75 0 0 1 6.5 0h3a.75.75 0 0 1 0 1.5h-.75v1l-.001.041a6.724 6.724 0 0 1 3.464 1.435l.007-.006.75-.75a.749.749 0 0 1 1.275.326.749.749 0 0 1-.215.734l-.75.75-.006.007a6.75 6.75 0 1 1-10.548 0L2.72 5.03l-.75-.75a.751.751 0 0 1 .018-1.042.751.751 0 0 1 1.042-.018l.75.75.007.006A6.72 6.72 0 0 1 7.25 2.541V1.5H6.5a.75.75 0 0 1-.75-.75ZM8 14.5a5.25 5.25 0 1 0-.001-10.501A5.25 5.25 0 0 0 8 14.5Zm.389-6.7 1.33-1.33a.75.75 0 1 1 1.061 1.06L9.45 8.861A1.503 1.503 0 0 1 8 10.75a1.499 1.499 0 1 1 .389-2.950Z"/></svg><div class="t" id="t50" style="left:1805.7px;top:466.15px;font-size:15px;font-weight:400;color:#59636e;font-family:'Liberation Sans', sans-serif;letter-spacing:-0.497px;">38s</div><svg class="ic" style="left:2016px;top:455.25px;width:20px;height:20px;color:#59636e;" viewBox="0 0 16 16" fill="currentColor"><path d="M8 9a1.5 1.5 0 1 0 0-3 1.5 1.5 0 0 0 0 3ZM1.5 9a1.5 1.5 0 1 0 0-3 1.5 1.5 0 0 0 0 3Zm13 0a1.5 1.5 0 1 0 0-3 1.5 1.5 0 0 0 0 3Z"/></svg><div class="b" style="left:462px;top:610px;width:1599px;height:1px;background:#dee3e8;"></div><svg class="ic" style="left:483px;top:539.5px;width:20px;height:20px;color:#38803c;" viewBox="0 0 16 16" fill="currentColor"><path d="M8 16A8 8 0 1 1 8 0a8 8 0 0 1 0 16Zm3.78-9.72a.751.751 0 0 0-.018-1.042.751.751 0 0 0-1.042-.018L6.75 9.19 5.28 7.72a.751.751 0 0 0-1.042.018.751.751 0 0 0-.018 1.042l2 2a.75.75 0 0 0 1.060 0Z"/></svg><div class="t" id="t51" style="left:512.5px;top:534.80px;font-size:20px;font-weight:400;-webkit-text-stroke:0.500px #1f2328;color:#1f2328;font-family:'Liberation Sans', sans-serif;letter-spacing:0.289px;">update readme with json schema info</div><div class="t" id="t52" style="left:513.5px;top:565.60px;font-size:15px;font-weight:400;color:#59636e;font-family:'Liberation Sans', sans-serif;letter-spacing:-0.067px;"><b>CodeCov</b> #1094: Pull request <u>#351</u> opened by yiwen-h</div><div class="b" style="left:1282px;top:551.2px;width:155px;height:23px;background:#ddf4ff;border-radius:7.5px;"></div><div class="t" id="t53" style="left:1289.0px;top:549.60px;font-size:13.5px;font-weight:400;color:#3b72d4;font-family:'Liberation Mono', monospace;letter-spacing:0.102px;">345_update-readme</div><svg class="ic" style="left:1781px;top:541.5px;width:20px;height:20px;color:#59636e;" viewBox="0 0 16 16" fill="currentColor"><path d="M4.75 0a.75.75 0 0 1 .75.75V2h5V.75a.75.75 0 0 1 1.5 0V2h1.25c.966 0 1.75.784 1.75 1.75v10.5A1.75 1.75 0 0 1 13.25 16H2.75A1.75 1.75 0 0 1 1 14.25V3.75C1 2.784 1.784 2 2.75 2H4V.75A.75.75 0 0 1 4.75 0ZM2.5 7.5v6.75c0 .138.112.25.25.25h10.5a.25.25 0 0 0 .25-.25V7.5Zm10.75-4H2.75a.25.25 0 0 0-.25.25V6h11V3.75a.25.25 0 0 0-.25-.25Z"/></svg><div class="t" id="t54" style="left:1805.7px;top:537.30px;font-size:15px;font-weight:400;color:#59636e;font-family:'Liberation Sans', sans-serif;letter-spacing:-0.341px;">3 days ago</div><svg class="ic" style="left:1781px;top:567.5px;width:20px;height:20px;color:#59636e;" viewBox="0 0 16 16" fill="currentColor"><path d="M5.75.75A.75.75 0 0 1 6.5 0h3a.75.75 0 0 1 0 1.5h-.75v1l-.001.041a6.724 6.724 0 0 1 3.464 1.435l.007-.006.75-.75a.749.749 0 0 1 1.275.326.749.749 0 0 1-.215.734l-.75.75-.006.007a6.75 6.75 0 1 1-10.548 0L2.72 5.03l-.75-.75a.751.751 0 0 1 .018-1.042.751.751 0 0 1 1.042-.018l.75.75.007.006A6.72 6.72 0 0 1 7.25 2.541V1.5H6.5a.75.75 0 0 1-.75-.75ZM8 14.5a5.25 5.25 0 1 0-.001-10.501A5.25 5.25 0 0 0 8 14.5Zm.389-6.7 1.33-1.33a.75.75 0 1 1 1.061 1.06L9.45 8.861A1.503 1.503 0 0 1 8 10.75a1.499 1.499 0 1 1 .389-2.950Z"/></svg><div class="t" id="t55" style="left:1805.7px;top:563.40px;font-size:15px;font-weight:400;color:#59636e;font-family:'Liberation Sans', sans-serif;letter-spacing:-0.497px;">40s</div><svg class="ic" style="left:2016px;top:552.5px;width:20px;height:20px;color:#59636e;" viewBox="0 0 16 16" fill="currentColor"><path d="M8 9a1.5 1.5 0 1 0 0-3 1.5 1.5 0 0 0 0 3ZM1.5 9a1.5 1.5 0 1 0 0-3 1.5 1.5 0 0 0 0 3Zm13 0a1.5 1.5 0 1 0 0-3 1.5 1.5 0 0 0 0 3Z"/></svg><div class="b" style="left:462px;top:707px;width:1599px;height:1px;background:#dee3e8;"></div><svg class="ic" style="left:483px;top:636.75px;width:20px;height:20px;color:#38803c;" viewBox="0 0 16 16" fill="currentColor"><path d="M8 16A8 8 0 1 1 8 0a8 8 0 0 1 0 16Zm3.78-9.72a.751.751 0 0 0-.018-1.042.751.751 0 0 0-1.042-.018L6.75 9.19 5.28 7.72a.751.751 0 0 0-1.042.018.751.751 0 0 0-.018 1.042l2 2a.75.75 0 0 0 1.060 0Z"/></svg><div class="t" id="t56" style="left:512.5px;top:632.05px;font-size:20px;font-weight:400;-webkit-text-stroke:0.500px #1f2328;color:#1f2328;font-family:'Liberation Sans', sans-serif;letter-spacing:0.340px;">Merge pull request #324 from The-Strategy-Unit/96_inequalities</div><div class="t" id="t57" style="left:512.5px;top:662.85px;font-size:15px;font-weight:400;color:#59636e;font-family:'Liberation Sans', sans-serif;letter-spacing:0.030px;"><b>Deploy Dev</b> #196: Commit <u>bd2ad4e</u> pushed by yiwen-h</div><div class="b" style="left:1282px;top:648.45px;width:48px;height:23px;background:#ddf4ff;border-radius:7.5px;"></div><div class="t" id="t58" style="left:1289.0px;top:646.85px;font-size:13.5px;font-weight:400;color:#3b72d4;font-family:'Liberation Mono', monospace;letter-spacing:0.105px;">main</div><svg class="ic" style="left:1781px;top:638.75px;width:20px;height:20px;color:#59636e;" viewBox="0 0 16 16" fill="currentColor"><path d="M4.75 0a.75.75 0 0 1 .75.75V2h5V.75a.75.75 0 0 1 1.5 0V2h1.25c.966 0 1.75.784 1.75 1.75v10.5A1.75 1.75 0 0 1 13.25 16H2.75A1.75 1.75 0 0 1 1 14.25V3.75C1 2.784 1.784 2 2.75 2H4V.75A.75.75 0 0 1 4.75 0ZM2.5 7.5v6.75c0 .138.112.25.25.25h10.5a.25.25 0 0 0 .25-.25V7.5Zm10.75-4H2.75a.25.25 0 0 0-.25.25V6h11V3.75a.25.25 0 0 0-.25-.25Z"/></svg><div class="t" id="t59" style="left:1805.7px;top:634.55px;font-size:15px;font-weight:400;color:#59636e;font-family:'Liberation Sans', sans-serif;letter-spacing:-0.341px;">3 days ago</div><svg class="ic" style="left:1781px;top:664.75px;width:20px;height:20px;color:#59636e;" viewBox="0 0 16 16" fill="currentColor"><path d="M5.75.75A.75.75 0 0 1 6.5 0h3a.75.75 0 0 1 0 1.5h-.75v1l-.001.041a6.724 6.724 0 0 1 3.464 1.435l.007-.006.75-.75a.749.749 0 0 1 1.275.326.749.749 0 0 1-.215.734l-.75.75-.006.007a6.75 6.75 0 1 1-10.548 0L2.72 5.03l-.75-.75a.751.751 0 0 1 .018-1.042.751.751 0 0 1 1.042-.018l.75.75.007.006A6.72 6.72 0 0 1 7.25 2.541V1.5H6.5a.75.75 0 0 1-.75-.75ZM8 14.5a5.25 5.25 0 1 0-.001-10.501A5.25 5.25 0 0 0 8 14.5Zm.389-6.7 1.33-1.33a.75.75 0 1 1 1.061 1.06L9.45 8.861A1.503 1.503 0 0 1 8 10.75a1.499 1.499 0 1 1 .389-2.950Z"/></svg><div class="t" id="t60" style="left:1805.7px;top:660.65px;font-size:15px;font-weight:400;color:#59636e;font-family:'Liberation Sans', sans-serif;letter-spacing:-0.409px;">2m 48s</div><svg class="ic" style="left:2016px;top:649.75px;width:20px;height:20px;color:#59636e;" viewBox="0 0 16 16" fill="currentColor"><path d="M8 9a1.5 1.5 0 1 0 0-3 1.5 1.5 0 0 0 0 3ZM1.5 9a1.5 1.5 0 1 0 0-3 1.5 1.5 0 0 0 0 3Zm13 0a1.5 1.5 0 1 0 0-3 1.5 1.5 0 0 0 0 3Z"/></svg><div class="b" style="left:462px;top:805px;width:1599px;height:1px;background:#dee3e8;"></div><svg class="ic" style="left:483px;top:734.0px;width:20px;height:20px;color:#38803c;" viewBox="0 0 16 16" fill="currentColor"><path d="M8 16A8 8 0 1 1 8 0a8 8 0 0 1 0 16Zm3.78-9.72a.751.751 0 0 0-.018-1.042.751.751 0 0 0-1.042-.018L6.75 9.19 5.28 7.72a.751.751 0 0 0-1.042.018.751.751 0 0 0-.018 1.042l2 2a.75.75 0 0 0 1.060 0Z"/></svg><div class="t" id="t61" style="left:512.5px;top:729.30px;font-size:20px;font-weight:400;-webkit-text-stroke:0.500px #1f2328;color:#1f2328;font-family:'Liberation Sans', sans-serif;letter-spacing:0.340px;">Merge pull request #324 from The-Strategy-Unit/96_inequalities</div><div class="t" id="t62" style="left:513.5px;top:760.10px;font-size:15px;font-weight:400;color:#59636e;font-family:'Liberation Sans', sans-serif;letter-spacing:-0.041px;"><b>CodeCov</b> #1093: Commit <u>bd2ad4e</u> pushed by yiwen-h</div><div class="b" style="left:1282px;top:745.7px;width:48px;height:23px;background:#ddf4ff;border-radius:7.5px;"></div><div class="t" id="t63" style="left:1289.0px;top:744.10px;font-size:13.5px;font-weight:400;color:#3b72d4;font-family:'Liberation Mono', monospace;letter-spacing:0.105px;">main</div><svg class="ic" style="left:1781px;top:736.0px;width:20px;height:20px;color:#59636e;" viewBox="0 0 16 16" fill="currentColor"><path d="M4.75 0a.75.75 0 0 1 .75.75V2h5V.75a.75.75 0 0 1 1.5 0V2h1.25c.966 0 1.75.784 1.75 1.75v10.5A1.75 1.75 0 0 1 13.25 16H2.75A1.75 1.75 0 0 1 1 14.25V3.75C1 2.784 1.784 2 2.75 2H4V.75A.75.75 0 0 1 4.75 0ZM2.5 7.5v6.75c0 .138.112.25.25.25h10.5a.25.25 0 0 0 .25-.25V7.5Zm10.75-4H2.75a.25.25 0 0 0-.25.25V6h11V3.75a.25.25 0 0 0-.25-.25Z"/></svg><div class="t" id="t64" style="left:1805.7px;top:731.80px;font-size:15px;font-weight:400;color:#59636e;font-family:'Liberation Sans', sans-serif;letter-spacing:-0.341px;">3 days ago</div><svg class="ic" style="left:1781px;top:762.0px;width:20px;height:20px;color:#59636e;" viewBox="0 0 16 16" fill="currentColor"><path d="M5.75.75A.75.75 0 0 1 6.5 0h3a.75.75 0 0 1 0 1.5h-.75v1l-.001.041a6.724 6.724 0 0 1 3.464 1.435l.007-.006.75-.75a.749.749 0 0 1 1.275.326.749.749 0 0 1-.215.734l-.75.75-.006.007a6.75 6.75 0 1 1-10.548 0L2.72 5.03l-.75-.75a.751.751 0 0 1 .018-1.042.751.751 0 0 1 1.042-.018l.75.75.007.006A6.72 6.72 0 0 1 7.25 2.541V1.5H6.5a.75.75 0 0 1-.75-.75ZM8 14.5a5.25 5.25 0 1 0-.001-10.501A5.25 5.25 0 0 0 8 14.5Zm.389-6.7 1.33-1.33a.75.75 0 1 1 1.061 1.06L9.45 8.861A1.503 1.503 0 0 1 8 10.75a1.499 1.499 0 1 1 .389-2.950Z"/></svg><div class="t" id="t65" style="left:1805.7px;top:757.90px;font-size:15px;font-weight:400;color:#59636e;font-family:'Liberation Sans', sans-serif;letter-spacing:-0.497px;">44s</div><svg class="ic" style="left:2016px;top:747.0px;width:20px;height:20px;color:#59636e;" viewBox="0 0 16 16" fill="currentColor"><path d="M8 9a1.5 1.5 0 1 0 0-3 1.5 1.5 0 0 0 0 3ZM1.5 9a1.5 1.5 0 1 0 0-3 1.5 1.5 0 0 0 0 3Zm13 0a1.5 1.5 0 1 0 0-3 1.5 1.5 0 0 0 0 3Z"/></svg><div class="b" style="left:462px;top:902px;width:1599px;height:1px;background:#dee3e8;"></div><svg class="ic" style="left:483px;top:831.25px;width:20px;height:20px;color:#38803c;" viewBox="0 0 16 16" fill="currentColor"><path d="M8 16A8 8 0 1 1 8 0a8 8 0 0 1 0 16Zm3.78-9.72a.751.751 0 0 0-.018-1.042.751.751 0 0 0-1.042-.018L6.75 9.19 5.28 7.72a.751.751 0 0 0-1.042.018.751.751 0 0 0-.018 1.042l2 2a.75.75 0 0 0 1.060 0Z"/></svg><div class="t" id="t66" style="left:512.5px;top:826.55px;font-size:20px;font-weight:400;-webkit-text-stroke:0.500px #1f2328;color:#1f2328;font-family:'Liberation Sans', sans-serif;letter-spacing:0.248px;">Merge pull request #348 from The-Strategy-Unit/update_pbm_data_to_use...</div><div class="t" id="t67" style="left:512.5px;top:857.35px;font-size:15px;font-weight:400;color:#59636e;font-family:'Liberation Sans', sans-serif;letter-spacing:0.054px;"><b>Deploy Dev</b> #195: Commit <u>a8fd453</u> pushed by tomjemmett</div><div class="b" style="left:1282px;top:842.95px;width:48px;height:23px;background:#ddf4ff;border-radius:7.5px;"></div><div class="t" id="t68" style="left:1289.0px;top:841.35px;font-size:13.5px;font-weight:400;color:#3b72d4;font-family:'Liberation Mono', monospace;letter-spacing:0.105px;">main</div><svg class="ic" style="left:1781px;top:833.25px;width:20px;height:20px;color:#59636e;" viewBox="0 0 16 16" fill="currentColor"><path d="M4.75 0a.75.75 0 0 1 .75.75V2h5V.75a.75.75 0 0 1 1.5 0V2h1.25c.966 0 1.75.784 1.75 1.75v10.5A1.75 1.75 0 0 1 13.25 16H2.75A1.75 1.75 0 0 1 1 14.25V3.75C1 2.784 1.784 2 2.75 2H4V.75A.75.75 0 0 1 4.75 0ZM2.5 7.5v6.75c0 .138.112.25.25.25h10.5a.25.25 0 0 0 .25-.25V7.5Zm10.75-4H2.75a.25.25 0 0 0-.25.25V6h11V3.75a.25.25 0 0 0-.25-.25Z"/></svg><div class="t" id="t69" style="left:1805.7px;top:829.05px;font-size:15px;font-weight:400;color:#59636e;font-family:'Liberation Sans', sans-serif;letter-spacing:-0.341px;">4 days ago</div><svg class="ic" style="left:1781px;top:859.25px;width:20px;height:20px;color:#59636e;" viewBox="0 0 16 16" fill="currentColor"><path d="M5.75.75A.75.75 0 0 1 6.5 0h3a.75.75 0 0 1 0 1.5h-.75v1l-.001.041a6.724 6.724 0 0 1 3.464 1.435l.007-.006.75-.75a.749.749 0 0 1 1.275.326.749.749 0 0 1-.215.734l-.75.75-.006.007a6.75 6.75 0 1 1-10.548 0L2.72 5.03l-.75-.75a.751.751 0 0 1 .018-1.042.751.751 0 0 1 1.042-.018l.75.75.007.006A6.72 6.72 0 0 1 7.25 2.541V1.5H6.5a.75.75 0 0 1-.75-.75ZM8 14.5a5.25 5.25 0 1 0-.001-10.501A5.25 5.25 0 0 0 8 14.5Zm.389-6.7 1.33-1.33a.75.75 0 1 1 1.061 1.06L9.45 8.861A1.503 1.503 0 0 1 8 10.75a1.499 1.499 0 1 1 .389-2.950Z"/></svg><div class="t" id="t70" style="left:1805.7px;top:855.15px;font-size:15px;font-weight:400;color:#59636e;font-family:'Liberation Sans', sans-serif;letter-spacing:-0.424px;">3m 8s</div><svg class="ic" style="left:2016px;top:844.25px;width:20px;height:20px;color:#59636e;" viewBox="0 0 16 16" fill="currentColor"><path d="M8 9a1.5 1.5 0 1 0 0-3 1.5 1.5 0 0 0 0 3ZM1.5 9a1.5 1.5 0 1 0 0-3 1.5 1.5 0 0 0 0 3Zm13 0a1.5 1.5 0 1 0 0-3 1.5 1.5 0 0 0 0 3Z"/></svg><div class="b" style="left:462px;top:999px;width:1599px;height:1px;background:#dee3e8;"></div><svg class="ic" style="left:483px;top:928.5px;width:20px;height:20px;color:#38803c;" viewBox="0 0 16 16" fill="currentColor"><path d="M8 16A8 8 0 1 1 8 0a8 8 0 0 1 0 16Zm3.78-9.72a.751.751 0 0 0-.018-1.042.751.751 0 0 0-1.042-.018L6.75 9.19 5.28 7.72a.751.751 0 0 0-1.042.018.751.751 0 0 0-.018 1.042l2 2a.75.75 0 0 0 1.060 0Z"/></svg><div class="t" id="t71" style="left:512.5px;top:923.80px;font-size:20px;font-weight:400;-webkit-text-stroke:0.500px #1f2328;color:#1f2328;font-family:'Liberation Sans', sans-serif;letter-spacing:0.248px;">Merge pull request #348 from The-Strategy-Unit/update_pbm_data_to_use...</div><div class="t" id="t72" style="left:513.5px;top:954.60px;font-size:15px;font-weight:400;color:#59636e;font-family:'Liberation Sans', sans-serif;letter-spacing:-0.012px;"><b>CodeCov</b> #1092: Commit <u>a8fd453</u> pushed by tomjemmett</div><div class="b" style="left:1282px;top:940.2px;width:48px;height:23px;background:#ddf4ff;border-radius:7.5px;"></div><div class="t" id="t73" style="left:1289.0px;top:938.60px;font-size:13.5px;font-weight:400;color:#3b72d4;font-family:'Liberation Mono', monospace;letter-spacing:0.105px;">main</div><svg class="ic" style="left:1781px;top:930.5px;width:20px;height:20px;color:#59636e;" viewBox="0 0 16 16" fill="currentColor"><path d="M4.75 0a.75.75 0 0 1 .75.75V2h5V.75a.75.75 0 0 1 1.5 0V2h1.25c.966 0 1.75.784 1.75 1.75v10.5A1.75 1.75 0 0 1 13.25 16H2.75A1.75 1.75 0 0 1 1 14.25V3.75C1 2.784 1.784 2 2.75 2H4V.75A.75.75 0 0 1 4.75 0ZM2.5 7.5v6.75c0 .138.112.25.25.25h10.5a.25.25 0 0 0 .25-.25V7.5Zm10.75-4H2.75a.25.25 0 0 0-.25.25V6h11V3.75a.25.25 0 0 0-.25-.25Z"/></svg><div class="t" id="t74" style="left:1805.7px;top:926.30px;font-size:15px;font-weight:400;color:#59636e;font-family:'Liberation Sans', sans-serif;letter-spacing:-0.341px;">4 days ago</div><svg class="ic" style="left:1781px;top:956.5px;width:20px;height:20px;color:#59636e;" viewBox="0 0 16 16" fill="currentColor"><path d="M5.75.75A.75.75 0 0 1 6.5 0h3a.75.75 0 0 1 0 1.5h-.75v1l-.001.041a6.724 6.724 0 0 1 3.464 1.435l.007-.006.75-.75a.749.749 0 0 1 1.275.326.749.749 0 0 1-.215.734l-.75.75-.006.007a6.75 6.75 0 1 1-10.548 0L2.72 5.03l-.75-.75a.751.751 0 0 1 .018-1.042.751.751 0 0 1 1.042-.018l.75.75.007.006A6.72 6.72 0 0 1 7.25 2.541V1.5H6.5a.75.75 0 0 1-.75-.75ZM8 14.5a5.25 5.25 0 1 0-.001-10.501A5.25 5.25 0 0 0 8 14.5Zm.389-6.7 1.33-1.33a.75.75 0 1 1 1.061 1.06L9.45 8.861A1.503 1.503 0 0 1 8 10.75a1.499 1.499 0 1 1 .389-2.950Z"/></svg><div class="t" id="t75" style="left:1805.7px;top:952.40px;font-size:15px;font-weight:400;color:#59636e;font-family:'Liberation Sans', sans-serif;letter-spacing:-0.497px;">40s</div><svg class="ic" style="left:2016px;top:941.5px;width:20px;height:20px;color:#59636e;" viewBox="0 0 16 16" fill="currentColor"><path d="M8 9a1.5 1.5 0 1 0 0-3 1.5 1.5 0 0 0 0 3ZM1.5 9a1.5 1.5 0 1 0 0-3 1.5 1.5 0 0 0 0 3Zm13 0a1.5 1.5 0 1 0 0-3 1.5 1.5 0 0 0 0 3Z"/></svg><div class="b" style="left:462px;top:1096px;width:1599px;height:1px;background:#dee3e8;"></div><svg class="ic" style="left:483px;top:1025.75px;width:20px;height:20px;color:#38803c;" viewBox="0 0 16 16" fill="currentColor"><path d="M8 16A8 8 0 1 1 8 0a8 8 0 0 1 0 16Zm3.78-9.72a.751.751 0 0 0-.018-1.042.751.751 0 0 0-1.042-.018L6.75 9.19 5.28 7.72a.751.751 0 0 0-1.042.018.751.751 0 0 0-.018 1.042l2 2a.75.75 0 0 0 1.060 0Z"/></svg><div class="t" id="t76" style="left:512.5px;top:1021.05px;font-size:20px;font-weight:400;-webkit-text-stroke:0.500px #1f2328;color:#1f2328;font-family:'Liberation Sans', sans-serif;letter-spacing:0.281px;">updates PBM data to use the new population projections data</div><div class="t" id="t77" style="left:513.5px;top:1051.85px;font-size:15px;font-weight:400;color:#59636e;font-family:'Liberation Sans', sans-serif;letter-spacing:-0.040px;"><b>CodeCov</b> #1091: Pull request <u>#348</u> opened by tomjemmett</div><div class="b" style="left:1282px;top:1037.45px;width:249px;height:23px;background:#ddf4ff;border-radius:7.5px;"></div><div class="t" id="t78" style="left:1288px;top:1035.85px;font-size:13.5px;font-weight:400;color:#3b72d4;font-family:'Liberation Mono', monospace;letter-spacing:0.170px;">update_pbm_data_to_use_new_…</div><svg class="ic" style="left:1781px;top:1027.75px;width:20px;height:20px;color:#59636e;" viewBox="0 0 16 16" fill="currentColor"><path d="M4.75 0a.75.75 0 0 1 .75.75V2h5V.75a.75.75 0 0 1 1.5 0V2h1.25c.966 0 1.75.784 1.75 1.75v10.5A1.75 1.75 0 0 1 13.25 16H2.75A1.75 1.75 0 0 1 1 14.25V3.75C1 2.784 1.784 2 2.75 2H4V.75A.75.75 0 0 1 4.75 0ZM2.5 7.5v6.75c0 .138.112.25.25.25h10.5a.25.25 0 0 0 .25-.25V7.5Zm10.75-4H2.75a.25.25 0 0 0-.25.25V6h11V3.75a.25.25 0 0 0-.25-.25Z"/></svg><div class="t" id="t79" style="left:1805.7px;top:1023.55px;font-size:15px;font-weight:400;color:#59636e;font-family:'Liberation Sans', sans-serif;letter-spacing:-0.341px;">4 days ago</div><svg class="ic" style="left:1781px;top:1053.75px;width:20px;height:20px;color:#59636e;" viewBox="0 0 16 16" fill="currentColor"><path d="M5.75.75A.75.75 0 0 1 6.5 0h3a.75.75 0 0 1 0 1.5h-.75v1l-.001.041a6.724 6.724 0 0 1 3.464 1.435l.007-.006.75-.75a.749.749 0 0 1 1.275.326.749.749 0 0 1-.215.734l-.75.75-.006.007a6.75 6.75 0 1 1-10.548 0L2.72 5.03l-.75-.75a.751.751 0 0 1 .018-1.042.751.751 0 0 1 1.042-.018l.75.75.007.006A6.72 6.72 0 0 1 7.25 2.541V1.5H6.5a.75.75 0 0 1-.75-.75ZM8 14.5a5.25 5.25 0 1 0-.001-10.501A5.25 5.25 0 0 0 8 14.5Zm.389-6.7 1.33-1.33a.75.75 0 1 1 1.061 1.06L9.45 8.861A1.503 1.503 0 0 1 8 10.75a1.499 1.499 0 1 1 .389-2.950Z"/></svg><div class="t" id="t80" style="left:1805.7px;top:1049.65px;font-size:15px;font-weight:400;color:#59636e;font-family:'Liberation Sans', sans-serif;letter-spacing:-0.497px;">44s</div><svg class="ic" style="left:2016px;top:1038.75px;width:20px;height:20px;color:#59636e;" viewBox="0 0 16 16" fill="currentColor"><path d="M8 9a1.5 1.5 0 1 0 0-3 1.5 1.5 0 0 0 0 3ZM1.5 9a1.5 1.5 0 1 0 0-3 1.5 1.5 0 0 0 0 3Zm13 0a1.5 1.5 0 1 0 0-3 1.5 1.5 0 0 0 0 3Z"/></svg><svg class="ic" style="left:483px;top:1123.0px;width:20px;height:20px;color:#38803c;" viewBox="0 0 16 16" fill="currentColor"><path d="M8 16A8 8 0 1 1 8 0a8 8 0 0 1 0 16Zm3.78-9.72a.751.751 0 0 0-.018-1.042.751.751 0 0 0-1.042-.018L6.75 9.19 5.28 7.72a.751.751 0 0 0-1.042.018.751.751 0 0 0-.018 1.042l2 2a.75.75 0 0 0 1.060 0Z"/></svg><div class="t" id="t81" style="left:513.5px;top:1118.30px;font-size:20px;font-weight:400;-webkit-text-stroke:0.500px #1f2328;color:#1f2328;font-family:'Liberation Sans', sans-serif;letter-spacing:0.469px;">Add inequalities functionality</div><div class="t" id="t82" style="left:513.5px;top:1149.10px;font-size:15px;font-weight:400;color:#59636e;font-family:'Liberation Sans', sans-serif;letter-spacing:-0.116px;"><b>CodeCov</b> #1090: Pull request <u>#324</u> synchronize by yiwen-h</div><div class="b" style="left:1282px;top:1134.7px;width:138px;height:23px;background:#ddf4ff;border-radius:7.5px;"></div><div class="t" id="t83" style="left:1289.0px;top:1133.10px;font-size:13.5px;font-weight:400;color:#3b72d4;font-family:'Liberation Mono', monospace;letter-spacing:0.162px;">96_inequalities</div><svg class="ic" style="left:1781px;top:1125.0px;width:20px;height:20px;color:#59636e;" viewBox="0 0 16 16" fill="currentColor"><path d="M4.75 0a.75.75 0 0 1 .75.75V2h5V.75a.75.75 0 0 1 1.5 0V2h1.25c.966 0 1.75.784 1.75 1.75v10.5A1.75 1.75 0 0 1 13.25 16H2.75A1.75 1.75 0 0 1 1 14.25V3.75C1 2.784 1.784 2 2.75 2H4V.75A.75.75 0 0 1 4.75 0ZM2.5 7.5v6.75c0 .138.112.25.25.25h10.5a.25.25 0 0 0 .25-.25V7.5Zm10.75-4H2.75a.25.25 0 0 0-.25.25V6h11V3.75a.25.25 0 0 0-.25-.25Z"/></svg><div class="t" id="t84" style="left:1804.7px;top:1120.80px;font-size:15px;font-weight:400;color:#59636e;font-family:'Liberation Sans', sans-serif;letter-spacing:-0.326px;">last week</div><svg class="ic" style="left:1781px;top:1151.0px;width:20px;height:20px;color:#59636e;" viewBox="0 0 16 16" fill="currentColor"><path d="M5.75.75A.75.75 0 0 1 6.5 0h3a.75.75 0 0 1 0 1.5h-.75v1l-.001.041a6.724 6.724 0 0 1 3.464 1.435l.007-.006.75-.75a.749.749 0 0 1 1.275.326.749.749 0 0 1-.215.734l-.75.75-.006.007a6.75 6.75 0 1 1-10.548 0L2.72 5.03l-.75-.75a.751.751 0 0 1 .018-1.042.751.751 0 0 1 1.042-.018l.75.75.007.006A6.72 6.72 0 0 1 7.25 2.541V1.5H6.5a.75.75 0 0 1-.75-.75ZM8 14.5a5.25 5.25 0 1 0-.001-10.501A5.25 5.25 0 0 0 8 14.5Zm.389-6.7 1.33-1.33a.75.75 0 1 1 1.061 1.06L9.45 8.861A1.503 1.503 0 0 1 8 10.75a1.499 1.499 0 1 1 .389-2.950Z"/></svg><div class="t" id="t85" style="left:1805.7px;top:1146.90px;font-size:15px;font-weight:400;color:#59636e;font-family:'Liberation Sans', sans-serif;letter-spacing:-0.497px;">34s</div><svg class="ic" style="left:2016px;top:1136.0px;width:20px;height:20px;color:#59636e;" viewBox="0 0 16 16" fill="currentColor"><path d="M8 9a1.5 1.5 0 1 0 0-3 1.5 1.5 0 0 0 0 3ZM1.5 9a1.5 1.5 0 1 0 0-3 1.5 1.5 0 0 0 0 3Zm13 0a1.5 1.5 0 1 0 0-3 1.5 1.5 0 0 0 0 3Z"/></svg></body></html>
